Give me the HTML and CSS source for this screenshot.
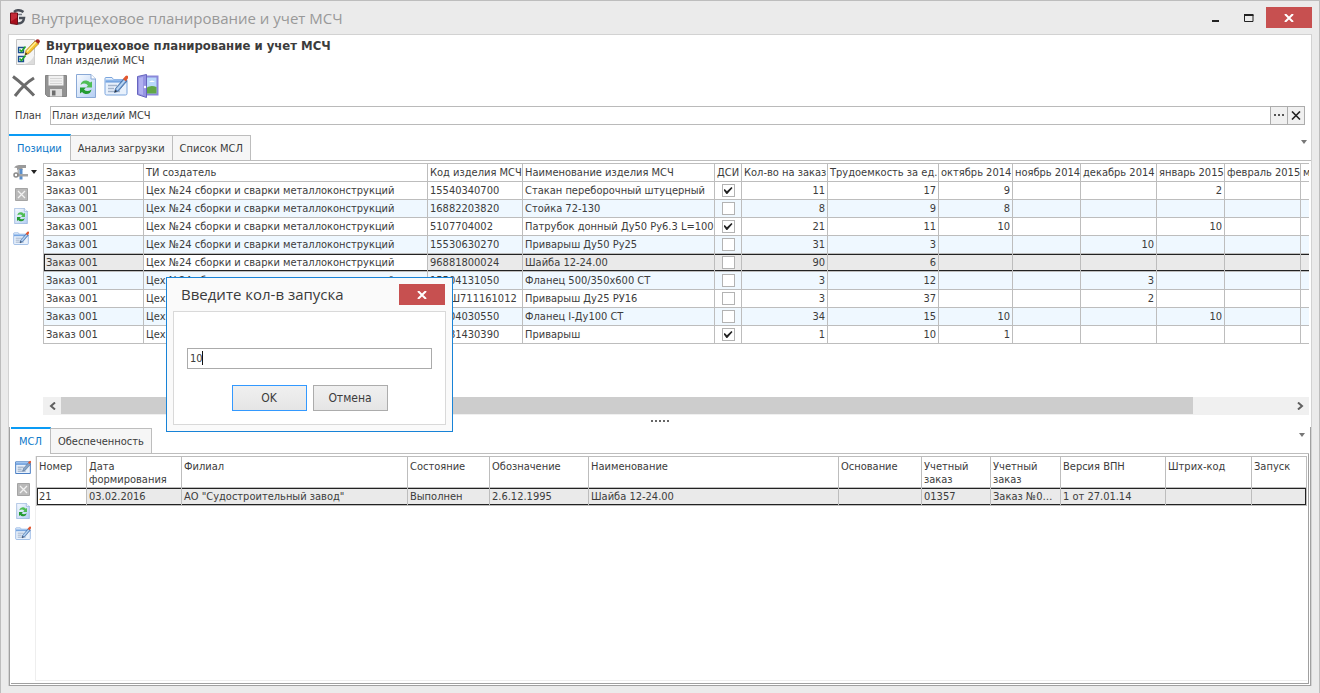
FILE: index.html
```html
<!DOCTYPE html>
<html lang="ru">
<head>
    <meta charset="UTF-8">
    <meta name="viewport" content="width=device-width, initial-scale=1.0">
    <title>Внутрицеховое планирование и учет МСЧ</title>
    <link rel="stylesheet" href="styles.css">
</head>
<body>
    <!-- Shared icons -->
    <svg class="sprite" aria-hidden="true">
        <linearGradient id="paper" x1="0" y1="0" x2="1" y2="1">
            <stop offset="0" stop-color="#f8fbff"/><stop offset="1" stop-color="#b4cef3"/>
        </linearGradient>
        <linearGradient id="blue" x1="0" y1="0" x2="0" y2="1">
            <stop offset="0" stop-color="#a5c8f2"/><stop offset="1" stop-color="#5f94d8"/>
        </linearGradient>
        <symbol id="refresh" viewBox="0 0 20 24">
            <path d="M.5.5h14.500l4.500 4.500v18.500H.5z" fill="url(#paper)" stroke="#8aa9d6"/>
            <path d="M15 .5v4.500h4.500" fill="#fff" stroke="#8aa9d6"/>
            <path d="M4.500 11q1-5 6-4.500 2.500.3 3.500 2l2-1v6h-6l2-2q-3-3.500-7.500-.5z" fill="#4fbd55"/>
            <path d="M15.500 15.500q-1 5-6 4.500-2.500-.3-3.500-2l-2 1.500v-6h6l-2 2q3 3 7.500 0z" fill="#249b31"/>
        </symbol>
        <symbol id="edit" viewBox="0 0 24 22">
            <path d="M1 3.500q0-1 1-1h6l1.500 2h12.500q1 0 1 1v13q0 1.500-1.500 1.500h-19Q1 20 1 18.500z" fill="#e8f1fc" stroke="#7ba5dd"/>
            <path d="M1.500 4.500h21v3h-21z" fill="url(#blue)"/>
            <path d="M4 10.500h9M4 13.500h6M4 16.500h12" stroke="#a3b4cb" stroke-width="1.500"/>
            <path d="M10.500 17.500l1-4 8.500-10 3 2.500-8.500 10z" fill="#5f8dc6" stroke="#3e659b" stroke-width=".7"/>
            <path d="M12 14l8-9 1.500 1-8 9.500z" fill="#b9d5f2"/>
            <path d="M19 4l2.500-3q1.500-1 2.300 0t0 2.500l-2 2.800z" fill="#e3582f"/>
            <path d="M10.500 17.500l.8-2.500 1.700 1.300z" fill="#333"/>
        </symbol>
        <symbol id="form" viewBox="0 0 24 22">
            <path d="M1 2.500h22v17.500H1z" fill="#e8f1fc" stroke="#4b7fc4" stroke-width="1.500"/>
            <path d="M1.500 3h21v4h-21z" fill="url(#blue)"/>
            <path d="M4 10.500h9M4 13.500h6M4 16.500h12" stroke="#8fa2bb" stroke-width="1.500"/>
            <path d="M11.500 16.500l1-4 8-9 3 2.500-8 9z" fill="#86a4c8" stroke="#4c6687" stroke-width=".7"/>
            <path d="M19.500 4l2-2.500q1.500-1 2.300 0t0 2l-1.800 2.300z" fill="#e3582f"/>
        </symbol>
        <symbol id="delete" viewBox="0 0 13 13">
            <path d="M.5.5h12v12H.5z" fill="#b9b9b9" stroke="#a4a4a4"/>
            <path d="M3 3l7 7M10 3l-7 7" stroke="#f2f2f2" stroke-width="1.300"/>
        </symbol>
        <symbol id="cross" viewBox="0 0 10 8">
            <path d="M1 0l8 8M9 0l-8 8" stroke="currentColor" stroke-width="2"/>
        </symbol>
    </svg>

    <div class="window">
        <header class="titlebar">
            <svg class="logo" viewBox="0 0 17 17">
                <path d="M5 3Q9-.5 14.500 3" fill="none" stroke="#4a4f58" stroke-width="2.500"/>
                <path d="M9 14.500q5.500 0 6-5.500H10" fill="none" stroke="#4a4f58" stroke-width="2.500"/>
                <path d="M9 5.500h4" stroke="#777d87" stroke-width="1.500"/>
                <path d="M1.500 4h7v11.500l-7-1z" fill="#a80f1c" stroke="#6d0d15"/>
                <path d="M2 4.500h6v4l-6 4z" fill="#c42b37"/>
            </svg>
            <span class="titlebar-text">Внутрицеховое планирование и учет МСЧ</span>
            <button class="win-btn" aria-label="Свернуть"><svg width="9" height="10"><path d="M1 8h7" stroke="#222" stroke-width="2"/></svg></button>
            <button class="win-btn" aria-label="Развернуть"><svg width="10" height="8"><path d="M.5 1v6.500h8.500V1" fill="none" stroke="#222"/><path d="M0 1h9.500" stroke="#222" stroke-width="2"/></svg></button>
            <button class="close-btn" aria-label="Закрыть"><svg width="10" height="8"><use href="#cross"/></svg></button>
        </header>

        <main class="client">
            <div class="heading">
                <svg width="26" height="28" viewBox="0 0 26 28">
                    <path d="M1.500 1.500h18v25h-18z" fill="#f5f5f5" stroke="#c4c4c4"/>
                    <path d="M8 26.500q9-2 11.500-10v10z" fill="#dcdcdc"/>
                    <path d="M3.500 9.500h5v5h-5zM3.500 18.500h5v5h-5z" fill="#fff" stroke="#1b4f92" stroke-width="1.300"/>
                    <path d="M4.500 11.500l2 2 4-5M4.500 20.500l2 2 4-5" fill="none" stroke="#23a52b" stroke-width="1.700"/>
                    <path d="M10 17l1-4.500L20 3l3.500 3L14 15.500z" fill="#f7c32d" stroke="#a67914" stroke-width=".7"/>
                    <path d="M12 13.500L21 4" stroke="#fff0a0" stroke-width="1.300"/>
                    <path d="M20 3l1.500-1.500q3-1 3.500 2L23.500 6z" fill="#a92822"/>
                    <path d="M10 17l.6-2.500 1.800 1.500z" fill="#222"/>
                </svg>
                <div>
                    <h1>Внутрицеховое планирование и учет МСЧ</h1>
                    <p>План изделий МСЧ</p>
                </div>
            </div>

            <div class="toolbar">
                <button aria-label="Удалить"><svg width="24" height="24"><path d="M1 2.500Q11 10 22 21.500M22 4Q12 10 3 22" fill="none" stroke="#6b6b6b" stroke-width="3"/></svg></button>
                <button aria-label="Сохранить">
                    <svg width="24" height="24">
                        <path d="M1.500 1.500h21v21h-19l-2-2z" fill="#929292" stroke="#858585"/>
                        <path d="M4.500 1.500h15v10h-15z" fill="#f1f1f1"/>
                        <path d="M6 4.500h12M6 7h12M6 9.500h12" stroke="#d5d5d5"/>
                        <path d="M6 15h12v7.500H6z" fill="#dedede"/>
                        <path d="M8 16.500h3.500v5H8z" fill="#6d6d6d"/>
                    </svg>
                </button>
                <button aria-label="Обновить"><svg width="20" height="24"><use href="#refresh"/></svg></button>
                <button aria-label="Редактировать"><svg width="24" height="22"><use href="#edit"/></svg></button>
                <button aria-label="Выход">
                    <svg width="24" height="24">
                        <path d="M7.500 2.500h14v18h-14z" fill="#b9d9fb" stroke="#8a88da" stroke-width="2"/>
                        <path d="M9 15q5-5 11.500-2v6.500H9z" fill="#62a747"/>
                        <path d="M13 8q3-3 6 0z" fill="#fff"/>
                        <path d="M1.500 2.500l9-2v23l-9-3z" fill="#9694e3" stroke="#6664be"/>
                        <path d="M3 4l4-1v18l-4-1.500z" fill="#b1b0f0"/>
                        <circle cx="9" cy="13" r="1.200" fill="#fff"/>
                    </svg>
                </button>
            </div>

            <div class="plan">
                <label for="plan">План</label>
                <input id="plan" type="text" value="План изделий МСЧ">
                <button aria-label="Выбрать"><svg width="11" height="3"><path d="M0 1h2M4 1h2M8 1h2" stroke="#555" stroke-width="2"/></svg></button>
                <button aria-label="Очистить"><svg width="10" height="9"><path d="M1 .5l8 8M9 .5l-8 8" stroke="#222" stroke-width="1.600"/></svg></button>
            </div>

            <section class="pane pane-top">
                <nav class="tabs">
                    <button class="tab active">Позиции</button>
                    <button class="tab">Анализ загрузки</button>
                    <button class="tab">Список МСЛ</button>
                    <span class="tabs-rest"><i class="arrow"></i></span>
                </nav>
                <div class="pane-body">
                    <div class="side">
                        <button class="side-menu" aria-label="Инструменты">
                            <svg width="16" height="16">
                                <path d="M1 3.500Q3 .5 7 1h6v3H9.500v2H4V4z" fill="#9a9a9a"/>
                                <path d="M4.500 5h2v6h-2z" fill="#b5b5b5"/>
                                <path d="M6.500 5h3v10.500h-3z" fill="#5a8ecb"/>
                                <path d="M4 10h11v2.500H4z" fill="#a5a5a5"/>
                                <circle cx="3" cy="11" r="2" fill="none" stroke="#8b8b8b" stroke-width="1.500"/>
                            </svg>
                            <i class="arrow dark"></i>
                        </button>
                        <button aria-label="Удалить"><svg width="13" height="13"><use href="#delete"/></svg></button>
                        <button aria-label="Обновить"><svg width="14" height="16"><use href="#refresh"/></svg></button>
                        <button aria-label="Редактировать"><svg width="16" height="15"><use href="#edit"/></svg></button>
                    </div>
                    <div class="grid-box">
                        <table class="grid positions">
                            <colgroup>
                                <col class="w100"><col class="w284"><col class="w95"><col class="w192"><col class="w27"><col class="w86"><col class="w111"><col class="w74"><col class="w68"><col class="w76"><col class="w68"><col class="w76"><col>
                            </colgroup>
                            <thead>
                                <tr><th>Заказ</th><th>ТИ создатель</th><th>Код изделия МСЧ</th><th>Наименование изделия МСЧ</th><th>ДСИ</th><th>Кол-во на заказ</th><th>Трудоемкость за ед.</th><th>октябрь 2014</th><th>ноябрь 2014</th><th>декабрь 2014</th><th>январь 2015</th><th>февраль 2015</th><th>м</th></tr>
                            </thead>
                            <tbody>
                                <tr><td>Заказ 001</td><td>Цех №24 сборки и сварки металлоконструкций</td><td>15540340700</td><td>Стакан переборочный штуцерный</td><td><input type="checkbox" aria-label="ДСИ" checked></td><td>11</td><td>17</td><td>9</td><td></td><td></td><td>2</td><td></td><td></td></tr>
                                <tr><td>Заказ 001</td><td>Цех №24 сборки и сварки металлоконструкций</td><td>16882203820</td><td>Стойка 72-130</td><td><input type="checkbox" aria-label="ДСИ"></td><td>8</td><td>9</td><td>8</td><td></td><td></td><td></td><td></td><td></td></tr>
                                <tr><td>Заказ 001</td><td>Цех №24 сборки и сварки металлоконструкций</td><td>5107704002</td><td>Патрубок донный Ду50 Ру6.3 L=100</td><td><input type="checkbox" aria-label="ДСИ" checked></td><td>21</td><td>11</td><td>10</td><td></td><td></td><td>10</td><td></td><td></td></tr>
                                <tr><td>Заказ 001</td><td>Цех №24 сборки и сварки металлоконструкций</td><td>15530630270</td><td>Приварыш Ду50 Ру25</td><td><input type="checkbox" aria-label="ДСИ"></td><td>31</td><td>3</td><td></td><td></td><td>10</td><td></td><td></td><td></td></tr>
                                <tr class="selected"><td>Заказ 001</td><td class="focused">Цех №24 сборки и сварки металлоконструкций</td><td>96881800024</td><td>Шайба 12-24.00</td><td><input type="checkbox" aria-label="ДСИ"></td><td>90</td><td>6</td><td></td><td></td><td></td><td></td><td></td><td></td></tr>
                                <tr><td>Заказ 001</td><td>Цех №24 сборки и сварки металлоконструкций</td><td>15504131050</td><td>Фланец 500/350х600 СТ</td><td><input type="checkbox" aria-label="ДСИ"></td><td>3</td><td>12</td><td></td><td></td><td>3</td><td></td><td></td><td></td></tr>
                                <tr><td>Заказ 001</td><td>Цех №24 сборки и сварки металлоконструкций</td><td>ИТГШ711161012</td><td>Приварыш Ду25 РУ16</td><td><input type="checkbox" aria-label="ДСИ"></td><td>3</td><td>37</td><td></td><td></td><td>2</td><td></td><td></td><td></td></tr>
                                <tr><td>Заказ 001</td><td>Цех №24 сборки и сварки металлоконструкций</td><td>15504030550</td><td>Фланец I-Ду100 СТ</td><td><input type="checkbox" aria-label="ДСИ"></td><td>34</td><td>15</td><td>10</td><td></td><td></td><td>10</td><td></td><td></td></tr>
                                <tr><td>Заказ 001</td><td>Цех №24 сборки и сварки металлоконструкций</td><td>15581430390</td><td>Приварыш</td><td><input type="checkbox" aria-label="ДСИ" checked></td><td>1</td><td>10</td><td>1</td><td></td><td></td><td></td><td></td><td></td></tr>
                            </tbody>
                        </table>
                        <div class="scrollbar">
                            <button aria-label="Влево"><svg width="7" height="8"><path d="M6 .5L2 4l4 3.500" fill="none" stroke="#606060" stroke-width="2"/></svg></button>
                            <div class="track"><div class="thumb"></div></div>
                            <button aria-label="Вправо"><svg width="7" height="8"><path d="M1 .5L5 4 1 7.500" fill="none" stroke="#606060" stroke-width="2"/></svg></button>
                        </div>
                    </div>
                </div>
            </section>

            <div class="splitter"><i></i><i></i><i></i><i></i><i></i></div>

            <section class="pane pane-bottom">
                <nav class="tabs">
                    <button class="tab active">МСЛ</button>
                    <button class="tab">Обеспеченность</button>
                    <span class="tabs-rest"><i class="arrow"></i></span>
                </nav>
                <div class="pane-body">
                    <div class="side">
                        <button aria-label="Изменить"><svg width="16" height="15"><use href="#form"/></svg></button>
                        <button aria-label="Удалить"><svg width="13" height="13"><use href="#delete"/></svg></button>
                        <button aria-label="Обновить"><svg width="14" height="16"><use href="#refresh"/></svg></button>
                        <button aria-label="Редактировать"><svg width="16" height="15"><use href="#edit"/></svg></button>
                    </div>
                    <div class="grid-box">
                        <table class="grid msl">
                            <colgroup>
                                <col class="w50"><col class="w95"><col class="w226"><col class="w82"><col class="w99"><col><col class="w83"><col class="w69"><col class="w70"><col class="w105"><col class="w86"><col class="w55">
                            </colgroup>
                            <thead>
                                <tr><th>Номер</th><th>Дата формирования</th><th>Филиал</th><th>Состояние</th><th>Обозначение</th><th>Наименование</th><th>Основание</th><th>Учетный заказ</th><th>Учетный заказ</th><th>Версия ВПН</th><th>Штрих-код</th><th>Запуск</th></tr>
                            </thead>
                            <tbody>
                                <tr class="selected"><td class="focused">21</td><td>03.02.2016</td><td>АО "Судостроительный завод"</td><td>Выполнен</td><td>2.6.12.1995</td><td>Шайба 12-24.00</td><td></td><td>01357</td><td>Заказ №0123</td><td>1 от 27.01.14</td><td></td><td></td></tr>
                            </tbody>
                        </table>
                    </div>
                </div>
            </section>
        </main>

        <div class="dialog" role="dialog" aria-labelledby="dialog-title">
            <div class="dialog-head">
                <span id="dialog-title">Введите кол-в запуска</span>
                <button class="close-btn" aria-label="Закрыть"><svg width="10" height="8"><use href="#cross"/></svg></button>
            </div>
            <form class="dialog-body">
                <div class="field">
                    <input type="text" value="10" aria-labelledby="dialog-title">
                    <i class="caret"></i>
                </div>
                <div class="dialog-buttons">
                    <button type="button" class="primary">OK</button>
                    <button type="button">Отмена</button>
                </div>
            </form>
        </div>
    </div>
</body>
</html>
```
FILE: styles.css
```css
* {
    box-sizing: border-box;
}
body {
    margin: 0;
    font-family: "DejaVu Sans Condensed", "DejaVu Sans", sans-serif;
    font-size: 11px;
    color: #3c3c3c;
}
button, input {
    font: inherit;
    color: inherit;
    margin: 0;
}
button {
    display: flex;
    align-items: center;
    justify-content: center;
    padding: 0;
    border: none;
    background: none;
}
svg {
    display: block;
    flex: none;
}
.sprite {
    position: absolute;
    width: 0;
    height: 0;
}

/* Window frame */
.window {
    position: relative;
    display: flex;
    flex-direction: column;
    min-height: 100vh;
    padding: 0 7px 7px;
    background: #ebebeb;
    border: 1px solid #bdbdbd;
    border-bottom: none;
}
.titlebar {
    display: flex;
    align-items: center;
    height: 33px;
}
.logo {
    width: 17px;
    height: 17px;
    margin: 0 5px 0 1px;
}
.titlebar-text {
    flex: 1;
    font-family: "Open Sans", "Noto Sans", sans-serif;
    font-size: 15px;
    color: #999;
}
.win-btn {
    width: 33px;
    height: 21px;
}
.close-btn {
    width: 46px;
    height: 21px;
    color: #fff;
    background: #c75050;
}
.titlebar .close-btn {
    margin-left: 1px;
}
.client {
    flex: 1;
    display: flex;
    flex-direction: column;
    background: #fff;
    border: 1px solid #d2d2d2;
    border-bottom: none;
    min-width: 0;
}

/* Form heading */
.heading {
    display: flex;
    gap: 5px;
    padding: 3px 6px 0;
    height: 36px;
}
.heading h1 {
    margin: 0;
    font-size: 13px;
    line-height: 16px;
}
.heading p {
    margin: 0;
    line-height: 13px;
}
.toolbar {
    display: flex;
    align-items: center;
    gap: 8px;
    padding: 2px 3px;
    height: 30px;
}
.plan {
    display: flex;
    align-items: center;
    padding: 0 6px;
    margin: 5px 0 9px;
}
.plan label {
    width: 35px;
}
.plan input {
    flex: 1;
    height: 19px;
    padding: 0 1px;
    border: 1px solid #bababa;
}
.plan button {
    width: 18px;
    height: 19px;
    margin-left: -1px;
    background: #f0f0f0;
    border: 1px solid #acacac;
}

/* Tabs */
.tabs {
    display: flex;
    height: 27px;
}
.tab {
    padding: 0 7px;
    height: 26px;
    align-self: flex-end;
    background: #f6f6f6;
    border: 1px solid #bdbdbd;
    border-left: none;
}
.tab.active {
    height: 27px;
    padding: 0 8px;
    color: #0b77c9;
    background: #fff;
    border-top: 2px solid #0a9bf5;
    border-bottom: none;
}
.tabs-rest {
    flex: 1;
    display: flex;
    justify-content: flex-end;
    padding: 6px 4px 0;
    border-bottom: 1px solid #bdbdbd;
}
.arrow {
    width: 0;
    height: 0;
    border: 3px solid transparent;
    border-top: 4px solid #777;
    border-bottom: none;
}
.arrow.dark {
    border-top-color: #222;
}

/* Panes */
.pane {
    display: flex;
    flex-direction: column;
}
.pane-body {
    flex: 1;
    display: flex;
}
.pane-top .pane-body {
    padding: 2px 2px 0 0;
}
.side {
    display: flex;
    flex-direction: column;
    align-items: flex-start;
    gap: 6px;
    flex: none;
}
.side button {
    height: 16px;
    width: 16px;
}
.pane-top .side {
    width: 34px;
    padding: 1px 0 0 4px;
}
.side .side-menu {
    width: 24px;
    gap: 2px;
}
.grid-box {
    flex: 1;
    min-width: 0;
    overflow: hidden;
    display: flex;
    flex-direction: column;
    justify-content: space-between;
}
.pane-top .grid-box {
    min-height: 252px;
}

/* Data grids */
.grid {
    table-layout: fixed;
    width: 100%;
    border-collapse: collapse;
}
.grid th, .grid td {
    padding: 0 2px;
    border: 1px solid #bdbdbd;
    text-align: left;
    font-weight: normal;
    line-height: 17px;
    white-space: nowrap;
    overflow: hidden;
}
.positions th:last-child, .positions td:last-child {
    border-right: none;
}
.positions td {
    height: 18px;
}
.positions tbody tr:nth-child(even) {
    background: #eff8ff;
}
.positions td:nth-child(n + 6) {
    text-align: right;
}
.positions td:nth-child(5) {
    padding: 0 5px;
}
.grid .selected td {
    background: #eaeaea;
    box-shadow: inset 0 1px #222, inset 0 -1px #222;
}
.grid .selected .focused {
    background: #fff;
}
.grid .selected td:first-child {
    box-shadow: inset 0 1px #222, inset 0 -1px #222, inset 1px 0 #222;
}
.msl .selected td:last-child {
    box-shadow: inset 0 1px #222, inset 0 -1px #222, inset -1px 0 #222;
}
.msl th {
    height: 31px;
    padding-top: 3px;
    line-height: 13px;
    vertical-align: top;
    white-space: normal;
}
.msl td {
    text-overflow: ellipsis;
}
.grid input {
    display: block;
    appearance: none;
    width: 13px;
    height: 13px;
    margin: 0 auto;
    background: #fff;
    border: 1px solid #b3b3b3;
}
.grid input:checked::after {
    content: "";
    display: block;
    width: 9px;
    height: 7px;
    margin: 2px 1px;
    background: #222;
    clip-path: polygon(0 42%, 14% 28%, 38% 62%, 88% 0, 100% 14%, 42% 100%, 32% 100%);
}
.w27 { width: 27px; }
.w50 { width: 50px; }
.w55 { width: 55px; }
.w68 { width: 68px; }
.w69 { width: 69px; }
.w70 { width: 70px; }
.w74 { width: 74px; }
.w76 { width: 76px; }
.w82 { width: 82px; }
.w83 { width: 83px; }
.w86 { width: 86px; }
.w95 { width: 95px; }
.w99 { width: 99px; }
.w100 { width: 100px; }
.w105 { width: 105px; }
.w111 { width: 111px; }
.w192 { width: 192px; }
.w226 { width: 226px; }
.w284 { width: 284px; }

.scrollbar {
    display: flex;
    height: 18px;
    background: #f0f0f0;
}
.scrollbar button {
    width: 18px;
}
.track {
    flex: 1;
}
.thumb {
    width: 92%;
    height: 17px;
    background: #cdcdcd;
}
.splitter {
    display: flex;
    justify-content: center;
    align-items: center;
    gap: 2px;
    height: 12px;
}
.splitter i {
    width: 2px;
    height: 2px;
    background: #666;
}

/* Lower pane */
.pane-bottom {
    flex: 1;
    border: 1px solid #a0a0a0;
    border-width: 0 1px 1px;
    padding: 0 1px;
}
.pane-bottom .pane-body {
    padding: 2px 1px 2px 0;
    margin-bottom: 1px;
    border: 1px solid #a0a0a0;
    border-width: 0 1px 1px 0;
}
.pane-bottom .side {
    width: 24px;
    padding: 3px 0 0 4px;
}
.pane-bottom .grid-box {
    border-left: 1px solid #eee;
    border-bottom: 1px solid #eee;
}

/* Launch quantity dialog */
.dialog {
    position: absolute;
    left: 165px;
    top: 276px;
    width: 287px;
    padding: 6px;
    background: #fafafa;
    border: 1px solid #1883d7;
}
.dialog-head {
    display: flex;
    align-items: center;
    justify-content: space-between;
    padding: 0 1px 0 8px;
    margin-bottom: 6px;
    font-family: "Open Sans", "Noto Sans", sans-serif;
    font-size: 15px;
    line-height: 21px;
}
.dialog-body {
    padding: 36px 13px 13px;
    background: #fff;
    border: 1px solid #d9d9d9;
}
.field {
    position: relative;
}
.field input {
    display: block;
    width: 100%;
    height: 21px;
    padding: 0 2px;
    border: 1px solid #ababab;
}
.caret {
    position: absolute;
    left: 15px;
    top: 3px;
    width: 1px;
    height: 14px;
    background: #111;
}
.dialog-buttons {
    display: flex;
    justify-content: center;
    gap: 6px;
    margin-top: 16px;
}
.dialog-buttons button {
    width: 75px;
    height: 26px;
    font-size: 12px;
    background: linear-gradient(#f0f0f0, #e5e5e5);
    border: 1px solid #acacac;
}
.dialog-buttons .primary {
    border-color: #3399ff;
}
```
